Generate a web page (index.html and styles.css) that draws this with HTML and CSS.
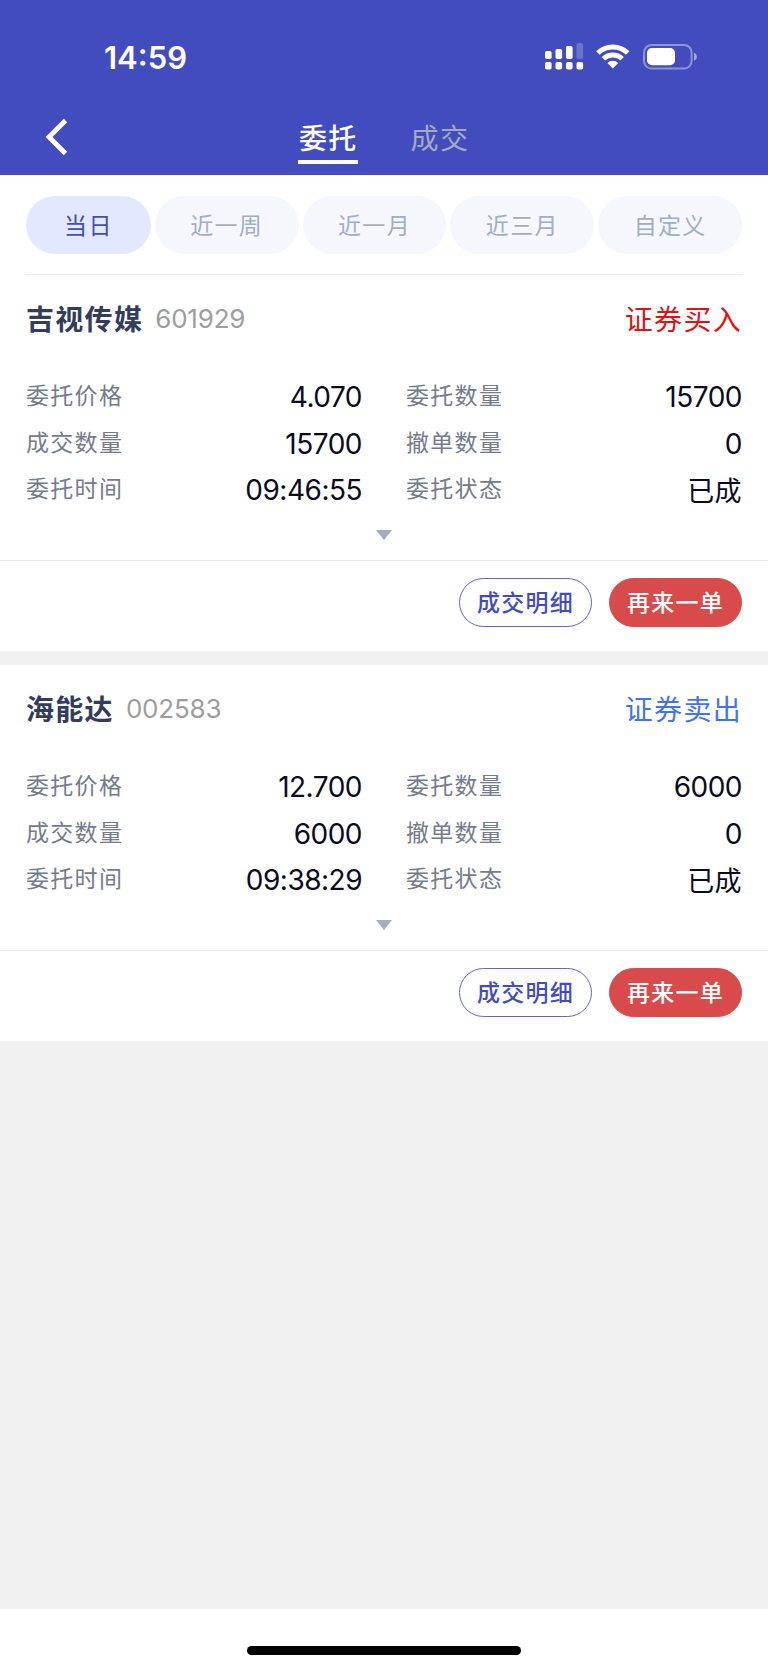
FILE: index.html
```html
<!DOCTYPE html>
<html lang="zh-CN">
<head>
    <meta charset="UTF-8">
    <meta name="viewport" content="width=device-width, initial-scale=1.0">
    <title>委托查询</title>
    <link rel="stylesheet" href="styles.css">
</head>
<body>
    <div class="page">
        <header class="header">
            <div class="status-bar">
                <span class="time">14:59</span>
                <svg class="status-icons" width="156" height="30" viewBox="0 0 156 30" fill="#fff">
                    <!-- signal -->
                    <rect x="1" y="10" width="6.6" height="8" rx="1.8"/>
                    <rect x="11.5" y="8" width="6.6" height="10" rx="1.8"/>
                    <rect x="22" y="5" width="6.6" height="13" rx="1.8"/>
                    <rect x="32.5" y="2" width="6.6" height="16" rx="1.8" opacity="0.22"/>
                    <rect x="1" y="21" width="6.6" height="7.6" rx="1.8"/>
                    <rect x="11.5" y="21" width="6.6" height="7.6" rx="1.8"/>
                    <rect x="22" y="21" width="6.6" height="7.6" rx="1.8"/>
                    <rect x="32.5" y="21" width="6.6" height="7.6" rx="1.8"/>
                    <!-- wifi -->
                    <path d="M53.9 12A21.8 21.8 0 0 1 83.7 12" fill="none" stroke="#fff" stroke-width="5"/>
                    <path d="M59.4 17.7A13.8 13.8 0 0 1 78.2 17.7" fill="none" stroke="#fff" stroke-width="4.8"/>
                    <path d="M68.8 27.4L63.4 22.1A7.6 7.6 0 0 1 74.2 22.1Z"/>
                    <!-- battery -->
                    <rect x="100" y="4" width="47.6" height="23.6" rx="7.5" fill="none" stroke="#fff" stroke-opacity="0.4" stroke-width="2"/>
                    <rect x="103" y="7" width="28" height="17.2" rx="5"/>
                    <path d="M150 11.8C153.8 13 153.8 18.6 150 19.8Z" opacity="0.5"/>
                </svg>
            </div>
            <nav class="nav">
                <svg class="back" width="24" height="38" viewBox="0 0 24 38" fill="none" stroke="#fff" stroke-width="4.8">
                    <path d="M20.5 2.5L4 19L20.5 35.5"/>
                </svg>
                <div class="tabs">
                    <span class="tab active">委托</span>
                    <span class="tab">成交</span>
                </div>
            </nav>
        </header>

        <div class="filters">
            <span class="filter selected">当日</span>
            <span class="filter">近一周</span>
            <span class="filter">近一月</span>
            <span class="filter">近三月</span>
            <span class="filter">自定义</span>
        </div>

        <section class="order">
            <div class="order-title">
                <span class="name">吉视传媒</span>
                <span class="code">601929</span>
                <span class="side buy">证券买入</span>
            </div>
            <div class="details">
                <div class="row"><span class="label">委托价格</span><span class="value">4.070</span></div>
                <div class="row"><span class="label">委托数量</span><span class="value">15700</span></div>
                <div class="row"><span class="label">成交数量</span><span class="value">15700</span></div>
                <div class="row"><span class="label">撤单数量</span><span class="value">0</span></div>
                <div class="row"><span class="label">委托时间</span><span class="value">09:46:55</span></div>
                <div class="row"><span class="label">委托状态</span><span class="value cjk">已成</span></div>
            </div>
            <div class="arrow"></div>
            <div class="actions">
                <button class="button outline">成交明细</button>
                <button class="button solid">再来一单</button>
            </div>
        </section>

        <section class="order">
            <div class="order-title">
                <span class="name">海能达</span>
                <span class="code">002583</span>
                <span class="side sell">证券卖出</span>
            </div>
            <div class="details">
                <div class="row"><span class="label">委托价格</span><span class="value">12.700</span></div>
                <div class="row"><span class="label">委托数量</span><span class="value">6000</span></div>
                <div class="row"><span class="label">成交数量</span><span class="value">6000</span></div>
                <div class="row"><span class="label">撤单数量</span><span class="value">0</span></div>
                <div class="row"><span class="label">委托时间</span><span class="value">09:38:29</span></div>
                <div class="row"><span class="label">委托状态</span><span class="value cjk">已成</span></div>
            </div>
            <div class="arrow"></div>
            <div class="actions">
                <button class="button outline">成交明细</button>
                <button class="button solid">再来一单</button>
            </div>
        </section>

        <footer class="bottom">
            <div class="home-indicator"></div>
        </footer>
    </div>
</body>
</html>
```
FILE: styles.css
```css
* {
    box-sizing: border-box;
}

body {
    margin: 0;
    font-family: Inter, "Noto Sans CJK SC", sans-serif;
    background-color: #f1f1f1;
    color: #0b0b1e;
}

.page {
    display: flex;
    flex-direction: column;
    width: 768px;
    height: 1669px;
}

.header {
    height: 175px;
    background-color: #434cbe;
    color: #fff;
}

.status-bar {
    display: flex;
    justify-content: space-between;
    align-items: flex-start;
    height: 101px;
    padding: 41px 68px 0 104px;
}

.time {
    font-size: 31px;
    font-weight: 600;
    line-height: 33px;
}

.status-icons {
    display: block;
}

.nav {
    display: flex;
    height: 74px;
    padding-left: 45px;
}

.back {
    margin-top: 17px;
}

.tabs {
    display: flex;
    gap: 52px;
    margin-left: 229px;
}

.tab {
    height: 63px;
    padding-left: 1px;
    font-size: 28px;
    line-height: 76px;
    letter-spacing: 1.3px;
    color: #a3abc0;
}

.tab.active {
    border-bottom: 4px solid #fff;
    color: #fff;
    font-weight: 500;
}

.filters {
    display: flex;
    gap: 4px;
    height: 100px;
    padding: 21px 26px 0;
    background: linear-gradient(#ebebed, #ebebed) 26px 99px / 716px 1px no-repeat #fff;
}

.filter {
    width: 144px;
    height: 58px;
    border-radius: 29px;
    background-color: #f6f7fd;
    color: #a3adc2;
    font-size: 23px;
    line-height: 60px;
    letter-spacing: 1.3px;
    text-align: center;
}

.filter.selected {
    width: 125px;
    background-color: #e4e8ff;
    color: #434cbe;
}

.order {
    height: 376px;
    background-color: #fff;
}

.order + .order {
    margin-top: 14px;
}

.order-title {
    display: flex;
    align-items: center;
    height: 97px;
    padding: 0 26px 11px;
    letter-spacing: 1.3px;
    font-size: 28px;
}

.name {
    color: #343c5c;
    font-weight: 700;
}

.code {
    margin-left: 12px;
    padding-top: 1px;
    color: #9d9d9d;
    font-size: 26px;
    letter-spacing: -0.2px;
}

.side {
    margin-left: auto;
}

.buy {
    color: #e01212;
}

.sell {
    color: #3f74ec;
}

.details {
    display: grid;
    grid-template-columns: 1fr 1fr;
    grid-auto-rows: 46.7px;
    column-gap: 44px;
    height: 140px;
    padding: 0 26px;
}

.row {
    display: flex;
    justify-content: space-between;
    line-height: 46px;
}

.label {
    padding-top: 1px;
    color: #747b8b;
    font-size: 23px;
    letter-spacing: 1.3px;
}

.value {
    padding-top: 2px;
    font-size: 28px;
    letter-spacing: -0.5px;
}

.value.cjk {
    padding-top: 4px;
    font-size: 27px;
    letter-spacing: 0.4px;
}

.arrow {
    width: 0;
    margin: 18px auto 20px;
    border: 8px solid transparent;
    border-top: 10px solid #a3adc2;
    border-bottom: 0;
}

.actions {
    display: flex;
    justify-content: flex-end;
    gap: 17px;
    padding: 17px 26px 0;
    border-top: 1px solid #e8e8ea;
}

.button {
    width: 133px;
    height: 49px;
    padding: 0 0 3px;
    border: 1px solid #5d65cf;
    border-radius: 25px;
    background-color: #fff;
    color: #434cbe;
    font-family: inherit;
    font-size: 23px;
    font-weight: 500;
    letter-spacing: 1.2px;
}

.button.solid {
    border-color: #d94b4b;
    background-color: #d94b4b;
    color: #fff;
}

.bottom {
    height: 60px;
    margin-top: auto;
    padding-top: 37px;
    background-color: #fff;
}

.home-indicator {
    width: 274px;
    height: 9px;
    margin: 0 auto;
    border-radius: 5px;
    background-color: #000;
}
```
